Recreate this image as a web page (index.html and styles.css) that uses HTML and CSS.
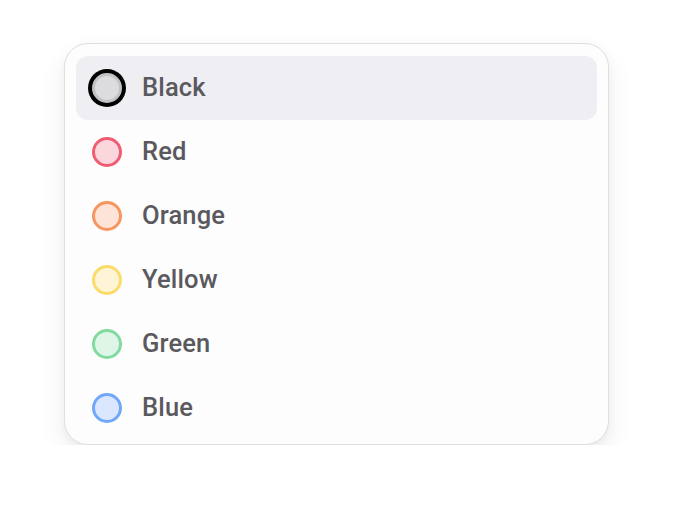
FILE: index.html
```html
<!DOCTYPE html>
<html>
<head>
<meta charset="utf-8">
<link rel="stylesheet" href="styles.css">
</head>
<body>
<div class="stage">
  <ul class="menu">
    <li class="item active"><span class="dot black"></span><span class="label">Black</span></li>
    <li class="item"><span class="dot red"></span><span class="label">Red</span></li>
    <li class="item"><span class="dot orange"></span><span class="label">Orange</span></li>
    <li class="item"><span class="dot yellow"></span><span class="label">Yellow</span></li>
    <li class="item"><span class="dot green"></span><span class="label">Green</span></li>
    <li class="item"><span class="dot blue"></span><span class="label">Blue</span></li>
  </ul>
</div>
</body>
</html>
```

FILE: styles.css
```css
html, body {
  margin: 0;
  padding: 0;
  background: #ffffff;
}
.stage {
  padding: 43px 0 0 64px;
}
.menu {
  list-style: none;
  margin: 0;
  width: 521px;
  padding: 12px 11px 4px 11px;
  border: 1px solid #dfdfe1;
  border-radius: 24px;
  background: #fdfdfd;
  box-shadow: 0 12px 28px rgba(0, 0, 0, 0.07), 0 3px 8px rgba(0, 0, 0, 0.04);
}
.item {
  display: flex;
  align-items: center;
  height: 64px;
  padding-left: 16px;
  border-radius: 12px;
  font-family: Roboto, "Liberation Sans", sans-serif;
  font-size: 25.5px;
  font-weight: 500;
  color: #5a595e;
}
.item.active {
  background: #efeef2;
}
.dot {
  box-sizing: border-box;
  width: 30px;
  height: 30px;
  border-radius: 50%;
  border: 3px solid;
  margin-right: 20px;
  flex: none;
}
.dot.black { border-color: #c2c2c5; background: #dcdcde; box-shadow: 0 0 0 4px #000; }
.dot.red { border-color: #f05d72; background: #fcd6dd; }
.dot.orange { border-color: #f5965f; background: #fee3d7; }
.dot.yellow { border-color: #fcdb6a; background: #fef4d6; }
.dot.green { border-color: #82da9f; background: #def5e7; }
.dot.blue { border-color: #71a7fa; background: #dbe7fe; }
.label {
  line-height: 1;
  letter-spacing: 0.15px;
}
```
